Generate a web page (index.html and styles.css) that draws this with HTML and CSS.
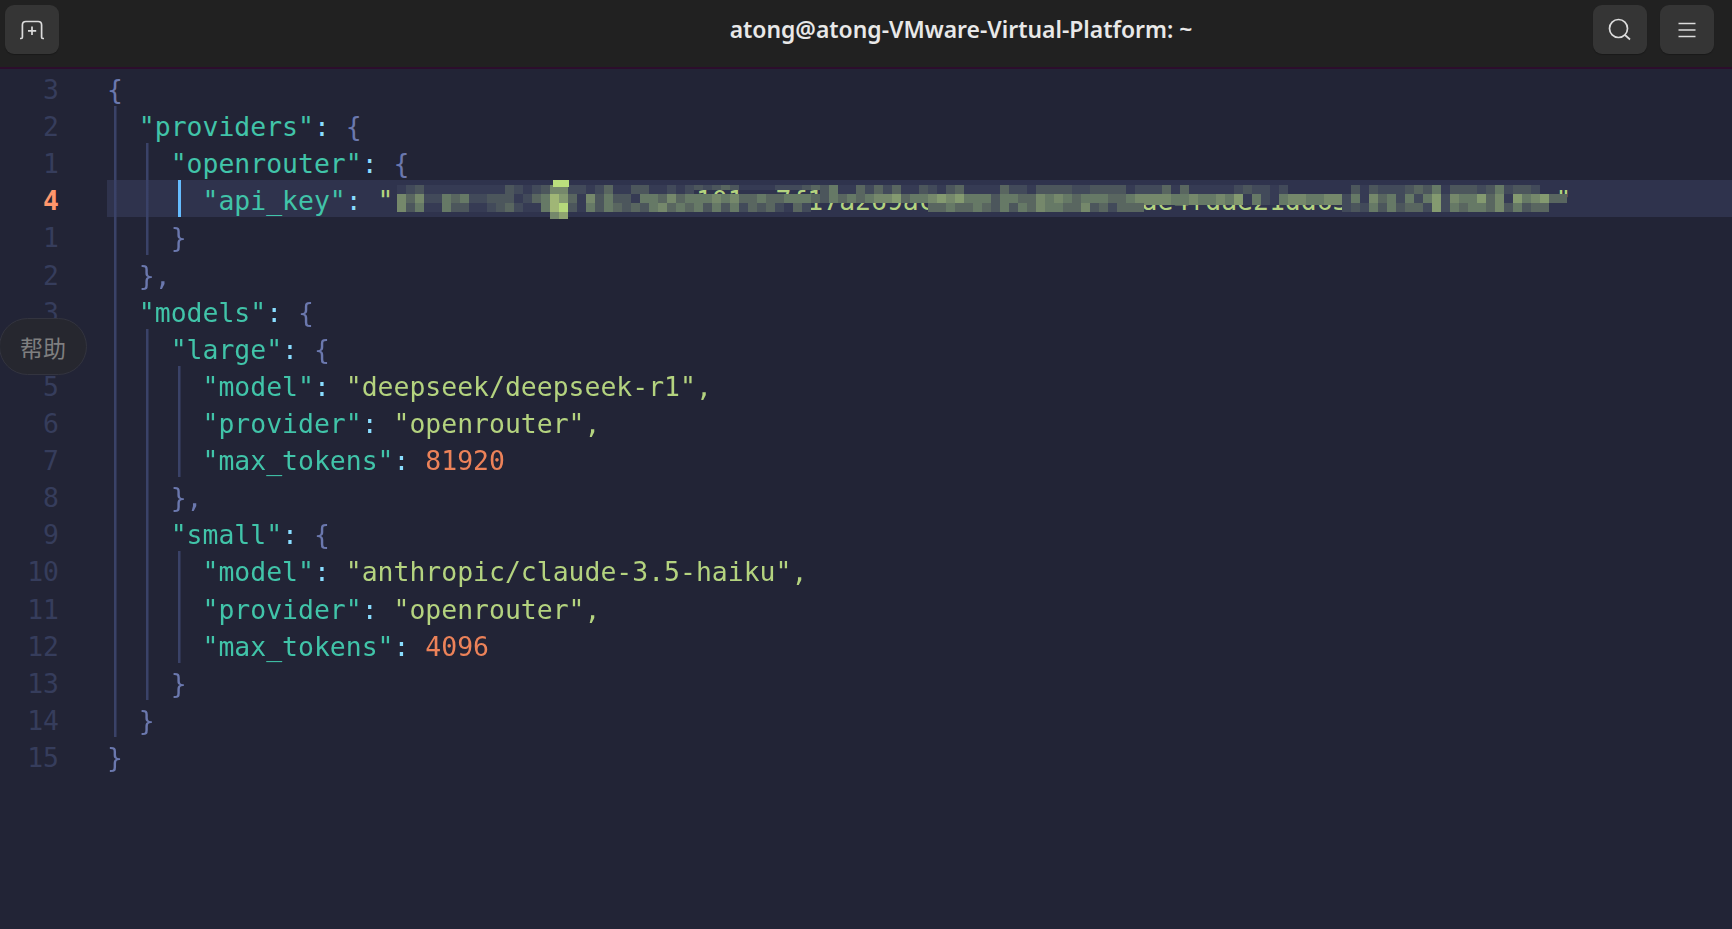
FILE: index.html
```html
<!DOCTYPE html>
<html lang="en">
<head>
<meta charset="utf-8">
<title>atong@atong-VMware-Virtual-Platform: ~</title>
<link rel="stylesheet" href="styles.css">
</head>
<body>
<div class="window">
  <header class="titlebar">
    <button class="btn" aria-label="New tab">
      <svg class="ico" width="26" height="20" viewBox="0 0 26 20"><path d="M1 18.5h1.2q1.2 0 1.2-1.2V5q0-3.5 3.5-3.5h12.2q3.5 0 3.5 3.5v12.3q0 1.2 1.2 1.2H25M13 6.500v8.500M9 10.800h8.200"/></svg>
    </button>
    <div class="title">atong@atong-VMware-Virtual-Platform: ~</div>
    <div class="actions">
      <button class="btn" aria-label="Search">
        <svg class="ico" width="26" height="26" viewBox="0 0 26 26"><circle cx="11.500" cy="11.500" r="9"/><path d="M18 18l5 4.500"/></svg>
      </button>
      <button class="btn" aria-label="Menu">
        <svg class="ico" width="20" height="16" viewBox="0 0 20 16"><path d="M1.500 1.500h17M1.500 8h17M1.500 14.500h17"/></svg>
      </button>
    </div>
  </header>
  <main class="editor">
    <div class="row"><span class="num">3</span><span class="code"><span class="b">{</span></span></div>
    <div class="row"><span class="num">2</span><span class="code"><span class="g"></span><span class="k">"providers"</span><span class="c">:</span> <span class="b">{</span></span></div>
    <div class="row"><span class="num">1</span><span class="code"><span class="g"></span><span class="g"></span><span class="k">"openrouter"</span><span class="c">:</span> <span class="b">{</span></span></div>
    <div class="row active"><span class="num">4</span><span class="code"><span class="g"></span><span class="g"></span><span class="g on"></span><span class="k">"api_key"</span><span class="c">:</span> <span class="s">"  xxxxxxxxxxxxxxxxx101aa7f17a269acxxxxxxxxxxxxxae4fdae21dd63xxxxxxxxxxxxx"</span><canvas id="mosaic" class="mosaic" width="1190" height="50"></canvas></span></div>
    <div class="row"><span class="num">1</span><span class="code"><span class="g"></span><span class="g"></span><span class="b">}</span></span></div>
    <div class="row"><span class="num">2</span><span class="code"><span class="g"></span><span class="b">},</span></span></div>
    <div class="row"><span class="num">3</span><span class="code"><span class="g"></span><span class="k">"models"</span><span class="c">:</span> <span class="b">{</span></span></div>
    <div class="row"><span class="num">4</span><span class="code"><span class="g"></span><span class="g"></span><span class="k">"large"</span><span class="c">:</span> <span class="b">{</span></span></div>
    <div class="row"><span class="num">5</span><span class="code"><span class="g"></span><span class="g"></span><span class="g"></span><span class="k">"model"</span><span class="c">:</span> <span class="s">"deepseek/deepseek-r1"</span><span class="s">,</span></span></div>
    <div class="row"><span class="num">6</span><span class="code"><span class="g"></span><span class="g"></span><span class="g"></span><span class="k">"provider"</span><span class="c">:</span> <span class="s">"openrouter"</span><span class="s">,</span></span></div>
    <div class="row"><span class="num">7</span><span class="code"><span class="g"></span><span class="g"></span><span class="g"></span><span class="k">"max_tokens"</span><span class="c">:</span> <span class="n">81920</span></span></div>
    <div class="row"><span class="num">8</span><span class="code"><span class="g"></span><span class="g"></span><span class="b">},</span></span></div>
    <div class="row"><span class="num">9</span><span class="code"><span class="g"></span><span class="g"></span><span class="k">"small"</span><span class="c">:</span> <span class="b">{</span></span></div>
    <div class="row"><span class="num">10</span><span class="code"><span class="g"></span><span class="g"></span><span class="g"></span><span class="k">"model"</span><span class="c">:</span> <span class="s">"anthropic/claude-3.5-haiku"</span><span class="s">,</span></span></div>
    <div class="row"><span class="num">11</span><span class="code"><span class="g"></span><span class="g"></span><span class="g"></span><span class="k">"provider"</span><span class="c">:</span> <span class="s">"openrouter"</span><span class="s">,</span></span></div>
    <div class="row"><span class="num">12</span><span class="code"><span class="g"></span><span class="g"></span><span class="g"></span><span class="k">"max_tokens"</span><span class="c">:</span> <span class="n">4096</span></span></div>
    <div class="row"><span class="num">13</span><span class="code"><span class="g"></span><span class="g"></span><span class="b">}</span></span></div>
    <div class="row"><span class="num">14</span><span class="code"><span class="g"></span><span class="b">}</span></span></div>
    <div class="row"><span class="num">15</span><span class="code"><span class="b">}</span></span></div>
    <div class="help">帮助</div>
  </main>
</div>
<script src="mosaic.js"></script>
</body>
</html>
```
FILE: styles.css
```css
* { box-sizing: border-box; }
html, body { margin: 0; height: 100%; overflow: hidden; background: #222436; }
.window { display: flex; flex-direction: column; height: 100vh; }
.titlebar {
  display: flex; align-items: flex-start; flex: none;
  height: 69px; padding: 5px 18px 0 5px;
  background: #212121; border-bottom: 2px solid #2c0e2c;
}
.btn {
  display: flex; align-items: center; justify-content: center;
  width: 54px; height: 49px; padding: 0; border: 0; border-radius: 9px;
  background: #353535; box-shadow: 0 1px 1px rgba(0,0,0,.25);
}
.ico { fill: none; stroke: #dcdcdc; stroke-width: 1.7; }
.title {
  flex: 1; padding-left: 270px; text-align: center; color: #e8e8e8;
  font: 600 22.9px/49px "Noto Sans", sans-serif;
}
.actions { display: flex; gap: 13px; }
.editor {
  position: relative; flex: 1; overflow: hidden; background: #222436;
  font: 26.44px/41.6px "DejaVu Sans Mono", monospace;
  filter: blur(.45px);
}
.row { display: flex; height: 37.12px; white-space: pre; }
.num { flex: none; width: 59px; margin-right: 48px; text-align: right; color: #363d5c; }
.code { position: relative; flex: 1; height: 37.12px; color: #7a86c4; }
.g {
  display: inline-block; width: 2ch; height: 37.12px; vertical-align: top;
  background: linear-gradient(#3a4268, #3a4268) 7px 0 / 2.5px 100% no-repeat;
}
.g.on { background: linear-gradient(#65bcff, #65bcff) 7px 0 / 3px 100% no-repeat; }
.active .num { color: #ff966c; font-weight: 700; }
.active .code { background: #2f334d; }
.k { color: #41c4a9; }
.c { color: #89ddff; }
.b { color: #6b78ae; }
.s { color: #b4d37f; }
.n { color: #ec8259; }
.mosaic { position: absolute; left: 290px; top: -8px; pointer-events: none; filter: blur(.4px); }
.help {
  position: absolute; left: -1px; top: 249px; width: 88px; height: 57px;
  display: flex; align-items: center; justify-content: center;
  border: 1.5px solid #33343f; border-radius: 29px; background: #26272f;
  color: #7f7f80; font: 23px "Noto Sans CJK SC", sans-serif;
}
```
FILE: mosaic.js
```js
// Redaction mosaic drawn over the api key: 9px cells, three rows, one palette index per cell.
var palette = { 0: '#2f334d', 1: '#363b54', 2: '#424a5a', 3: '#4c565c', 4: '#596660', 5: '#667966', 6: '#75886b', 7: '#849a70', 8: '#a0b676', 9: '#b5d97a' };
var segments = [
  [0, '123111111111321236622124113311212',
      '646225452233312458741635331554645',
      '635115331123421158931535434356454'],
  [33, '323431111222343511424241132134111',
       '556564454455543545456674556767555',
       '5353524342142.............4454454'],
  [66, '142213333223333122241411111232212',
       '355446565455544566665565565715215',
       '35354655446342444................'],
  [99, '0000000313222343513332352332',
       '6655662516452525726557461756744',
       '......2325353442725455463534400']
];
var ctx = document.getElementById('mosaic').getContext('2d');
var Y0 = 13;
segments.forEach(function (seg) {
  for (var r = 0; r < 3; r++) {
    var cells = seg[r + 1];
    for (var i = 0; i < cells.length; i++) {
      var col = palette[cells[i]];
      if (!col) continue;
      var c = seg[0] + i;
      ctx.fillStyle = col;
      var h = 9;
      if (r === 0 && c >= 33 && c <= 46) h = 5;
      if (r === 1 && c >= 83 && c <= 105) h = 11;
      ctx.fillRect(c * 9, Y0 + r * 9, 9, h);
    }
  }
});
ctx.fillStyle = '#bbdf7d';
ctx.fillRect(156, 8, 16, 7);
ctx.fillStyle = '#75886b';
ctx.fillRect(153, 40, 9, 7);
ctx.fillStyle = '#8fa470';
ctx.fillRect(162, 40, 9, 7);
```
